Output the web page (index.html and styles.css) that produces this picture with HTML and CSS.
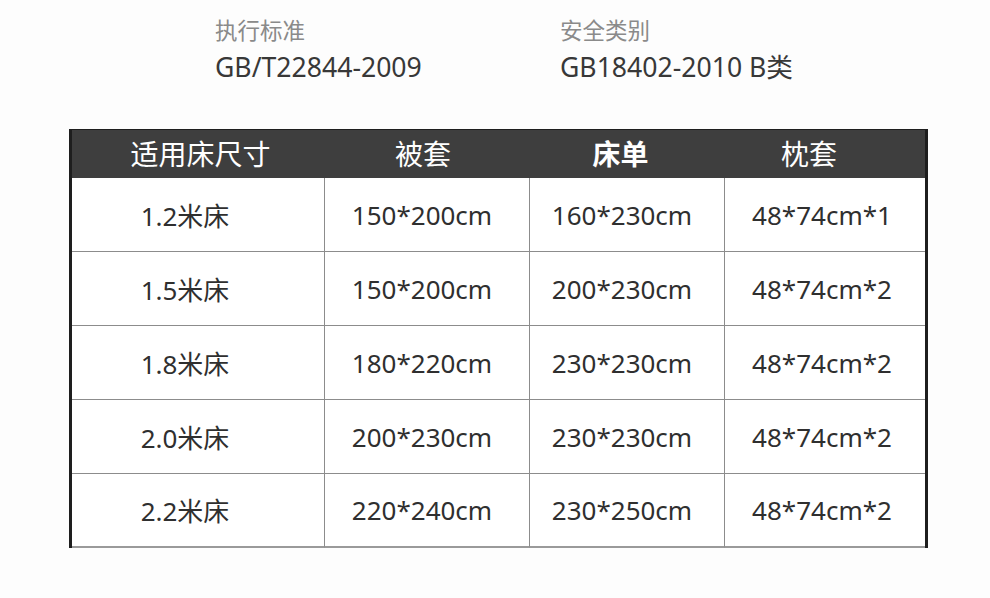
FILE: index.html
```html
<!DOCTYPE html>
<html lang="zh-CN">
<head>
<meta charset="utf-8">
<title>尺寸表</title>
<link rel="stylesheet" href="styles.css">
</head>
<body>
<div class="specs">
  <div class="spec">
    <div class="spec-label">执行标准</div>
    <div class="spec-value">GB/T22844-2009</div>
  </div>
  <div class="spec">
    <div class="spec-label">安全类别</div>
    <div class="spec-value">GB18402-2010 B类</div>
  </div>
</div>
<div class="size-table">
  <div class="cell head c1">适用床尺寸</div>
  <div class="cell head c2">被套</div>
  <div class="cell head c3 bold">床单</div>
  <div class="cell head c4 last">枕套</div>

  <div class="cell c1">1.2米床</div>
  <div class="cell c2">150*200cm</div>
  <div class="cell c3">160*230cm</div>
  <div class="cell c4 last">48*74cm*1</div>

  <div class="cell c1">1.5米床</div>
  <div class="cell c2">150*200cm</div>
  <div class="cell c3">200*230cm</div>
  <div class="cell c4 last">48*74cm*2</div>

  <div class="cell c1">1.8米床</div>
  <div class="cell c2">180*220cm</div>
  <div class="cell c3">230*230cm</div>
  <div class="cell c4 last">48*74cm*2</div>

  <div class="cell c1">2.0米床</div>
  <div class="cell c2">200*230cm</div>
  <div class="cell c3">230*230cm</div>
  <div class="cell c4 last">48*74cm*2</div>

  <div class="cell c1 bottom">2.2米床</div>
  <div class="cell c2 bottom">220*240cm</div>
  <div class="cell c3 bottom">230*250cm</div>
  <div class="cell c4 bottom last">48*74cm*2</div>
</div>
</body>
</html>
```
FILE: styles.css
```css
* { box-sizing: border-box; }
html, body { margin: 0; padding: 0; }
body {
  background: #fdfdfd;
  width: 990px;
  height: 598px;
  overflow: hidden;
  font-family: "Noto Sans", "Noto Sans CJK SC", sans-serif;
  color: #333;
}
.specs {
  display: flex;
  padding: 15px 0 0 215px;
}
.spec { width: 345px; }
.spec-label {
  font-size: 22.5px;
  line-height: 31px;
  color: #8a8a8a;
}
.spec-value {
  margin-top: 4px;
  font-size: 26.6px;
  line-height: 34px;
  color: #383838;
}
.size-table {
  margin: 45px 0 0 69px;
  width: 859px;
  display: grid;
  grid-template-columns: 253px 205px 195px 200px;
  grid-template-rows: 49px repeat(5, 74px);
  border-left: 3px solid #1e1e1e;
  border-right: 3px solid #1e1e1e;
}
.cell {
  display: flex;
  align-items: center;
  justify-content: center;
  font-size: 26px;
  color: #2f2f2f;
  background: #fff;
  border-right: 1px solid #8c8c8c;
  border-bottom: 1px solid #8c8c8c;
}
.cell.c1 { padding-right: 26px; }
.cell.c2 { padding-right: 10px; }
.cell.c3 { padding-right: 10px; }
.cell.c4 { padding-right: 6px; }
.cell.last { border-right: none; }
.cell.bottom { border-bottom: 2px solid #9a9a9a; }
.cell.head {
  background: #3e3e3e;
  color: #fff;
  font-size: 28px;
  border-top: 1px solid #1e1e1e;
  border-right: none;
  border-bottom: none;
  padding-bottom: 2px;
}
.cell.head.c1 { padding-right: 0; padding-left: 4px; }
.cell.head.c2 { padding-right: 9px; }
.cell.head.c3 { padding-right: 14px; }
.cell.head.c4 { padding-right: 32px; }
.cell.bold { font-weight: 700; }
```
